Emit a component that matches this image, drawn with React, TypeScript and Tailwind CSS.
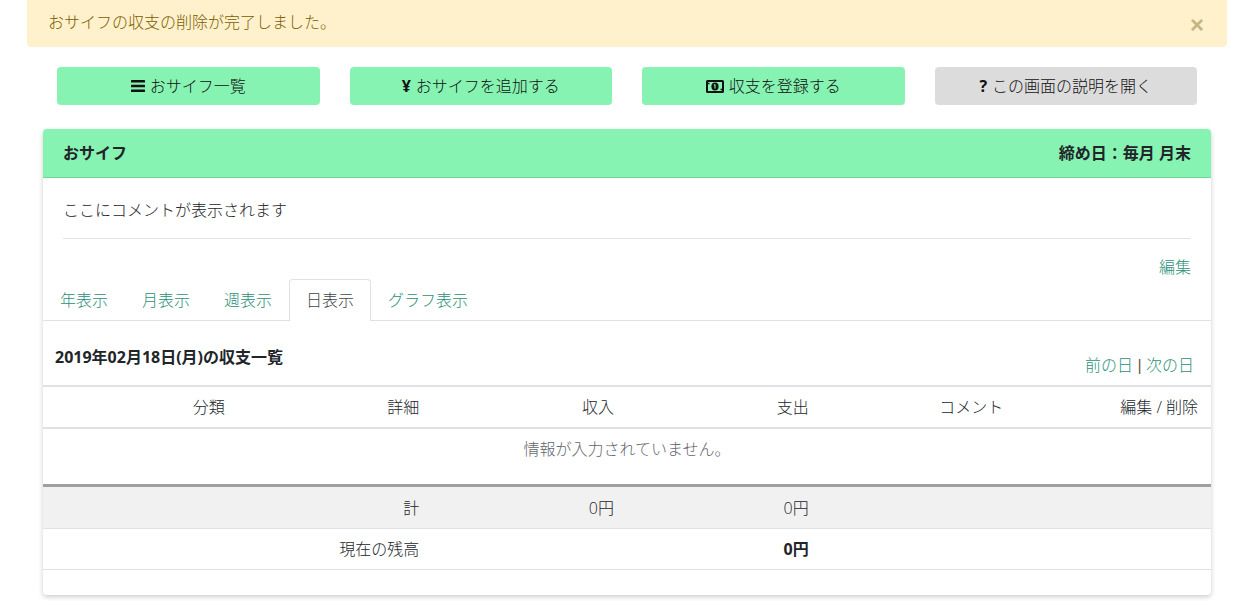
import type { ReactNode } from "react";

const font = "[font-family:'Open_Sans','Noto_Sans_CJK_JP',sans-serif]";

function BarsIcon() {
  return (
    <svg width="14" height="12" viewBox="0 0 14 12" fill="currentColor">
      <rect x="0" y="0" width="14" height="2.6" rx="0.5" />
      <rect x="0" y="4.7" width="14" height="2.6" rx="0.5" />
      <rect x="0" y="9.4" width="14" height="2.6" rx="0.5" />
    </svg>
  );
}

function MoneyIcon() {
  return (
    <svg width="18" height="13" viewBox="0 0 18 13" fill="none">
      <rect x="1" y="1" width="16" height="11" rx="0.5" stroke="currentColor" strokeWidth="2" />
      <ellipse cx="9" cy="6.5" rx="3.6" ry="4" fill="currentColor" />
      <path d="M9 4.4v4.2M8 5.2l1-.8" stroke="#86f3b3" strokeWidth="1.1" />
      <path d="M2 3.5h1.5M14.5 9.5H16" stroke="currentColor" strokeWidth="1.6" />
    </svg>
  );
}

function ActionButton({ icon, label, gray }: { icon: ReactNode; label: string; gray?: boolean }) {
  return (
    <div
      className={`flex h-[38px] flex-1 items-center justify-center gap-[5px] rounded-[4px] text-[16px] font-light text-[#111] ${
        gray ? "bg-[#dcdcdc]" : "bg-[#86f3b3]"
      }`}
    >
      {icon}
      <span>{label}</span>
    </div>
  );
}

const tabs = ["年表示", "月表示", "週表示", "日表示", "グラフ表示"];
const columns = ["分類", "詳細", "収入", "支出", "コメント", "編集 / 削除"];

function Row({ cells, className }: { cells: ReactNode[]; className: string }) {
  return (
    <div className={`grid grid-cols-6 items-center ${className}`}>
      {cells.map((c, i) => (
        <div key={i} className="pr-[13px] text-right">
          {c}
        </div>
      ))}
    </div>
  );
}

export default function App() {
  return (
    <div className={`h-[601px] overflow-hidden bg-white text-[16px] font-light text-[#212529] ${font}`}>
      <div className="mx-[27px] flex h-[47px] w-[1200px] items-start justify-between rounded-b-[4px] bg-[#fff1cc] pl-[21px] pr-[23px] pt-[10px] text-[#7a5c00]">
        <span className="leading-[24px]">おサイフの収支の削除が完了しました。</span>
        <span className="font-['Liberation_Sans'] text-[24px] font-bold leading-[30px] text-[#c5b585]">×</span>
      </div>

      <div className="ml-[57px] mt-[20px] flex w-[1140px] gap-[30px]">
        <ActionButton icon={<BarsIcon />} label="おサイフ一覧" />
        <ActionButton icon={<span className="font-bold">¥</span>} label="おサイフを追加する" />
        <ActionButton icon={<MoneyIcon />} label="収支を登録する" />
        <ActionButton icon={<span className="font-bold">?</span>} label="この画面の説明を開く" gray />
      </div>

      <div className="ml-[43px] mt-[24px] h-[466px] w-[1168px] rounded-[4px] shadow-[0_2px_5px_rgba(0,0,0,0.2)]">
        <div className="flex h-[49px] items-center justify-between rounded-t-[4px] border-b border-[#6fd79b] bg-[#86f3b3] px-[20px] font-bold">
          <span>おサイフ</span>
          <span>締め日：毎月 月末</span>
        </div>

        <div className="mx-[20px] h-[61px] border-b border-[#e4e4e4] pt-[20px] leading-[24px]">
          ここにコメントが表示されます
        </div>

        <div className="mt-[16px] pr-[20px] text-right leading-[24px] text-[#2b8f78]">編集</div>

        <div className="flex h-[42px] border-b border-[#dee2e6]">
          {tabs.map((t) => (
            <div
              key={t}
              className={
                t === "日表示"
                  ? "mb-[-1px] rounded-t-[4px] border border-b-0 border-[#dee2e6] bg-white px-4 pt-[8px] text-[#3d444b]"
                  : "border border-transparent px-4 pt-[8px] text-[#2b8f78]"
              }
            >
              {t}
            </div>
          ))}
        </div>

        <div className="flex h-[66px] border-b-2 border-[#dee2e6] pl-[12px] pr-[17px]">
          <span className="mt-[24px] font-bold leading-[24px]">2019年02月18日(月)の収支一覧</span>
          <span className="ml-auto mt-[32px] leading-[24px] text-[#2b8f78]">
            前の日<span className="whitespace-pre font-['Liberation_Sans'] text-[#6b5b45]"> | </span>次の日
          </span>
        </div>

        <Row cells={columns} className="h-[42px] border-b-2 border-[#dee2e6] text-[#212529]" />

        <div className="h-[58px] border-b-[3px] border-[#a0a0a0] pt-[8px] text-center leading-[24px] text-[#5f666d]">
          情報が入力されていません。
        </div>

        <Row
          cells={["", "計", "0円", "0円", "", ""]}
          className="h-[42px] border-b border-[#dee2e6] bg-[#f1f1f1] text-[#212529]"
        />
        <Row
          cells={["", "現在の残高", "", <b key="b" className="font-bold">0円</b>, "", ""]}
          className="h-[41px] border-b border-[#dee2e6] text-[#212529]"
        />
      </div>
    </div>
  );
}
